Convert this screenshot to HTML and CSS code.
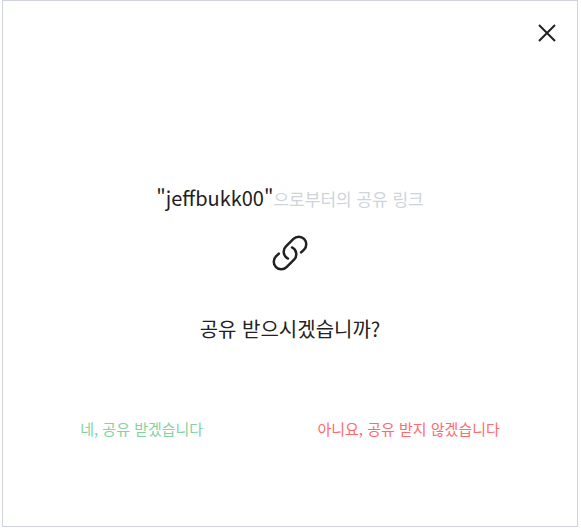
FILE: index.html
```html
<!DOCTYPE html>
<html lang="ko">
<head>
<meta charset="utf-8">
<meta name="viewport" content="width=device-width, initial-scale=1">
<title>공유 링크</title>
<link rel="stylesheet" href="styles.css">
</head>
<body>
<main class="dialog">
  <button class="close" type="button" aria-label="닫기">
    <svg viewBox="0 0 20 20" width="20" height="20" aria-hidden="true"><path d="M2 2L18 18M18 2L2 18"/></svg>
  </button>
  <section class="message">
    <p class="from"><span class="name">"jeffbukk00"</span><span class="suffix">으로부터의 공유 링크</span></p>
    <svg class="link-icon" viewBox="0 0 24 24" width="40" height="40" aria-hidden="true"><path d="M13.19 8.688a4.5 4.5 0 0 1 1.242 7.244l-4.5 4.5a4.5 4.5 0 0 1-6.364-6.364l1.757-1.757m13.35-.622 1.757-1.757a4.5 4.5 0 0 0-6.364-6.364l-4.5 4.5a4.5 4.5 0 0 0 1.242 7.244"/></svg>
    <h1 class="question">공유 받으시겠습니까?</h1>
  </section>
  <div class="actions">
    <button class="action accept" type="button">네, 공유 받겠습니다</button>
    <button class="action decline" type="button">아니요, 공유 받지 않겠습니다</button>
  </div>
</main>
</body>
</html>
```
FILE: styles.css
```css
* {
  box-sizing: border-box;
}

body {
  margin: 0;
  font-family: "Noto Sans CJK KR", sans-serif;
  color: #212121;
  background: #fff;
}

.dialog {
  display: flex;
  flex-direction: column;
  min-height: calc(100vh - 3px);
  margin: 0 3px 3px 2px;
  padding: 20px;
  border: 1px solid #d0d3dc;
}

.close {
  display: flex;
  align-self: flex-end;
  padding: 2px 0;
  border: 0;
  background: none;
  cursor: pointer;
}

.close svg {
  fill: none;
  stroke: #212121;
  stroke-width: 2;
}

.message {
  display: flex;
  flex-direction: column;
  align-items: center;
  margin-top: 137px;
}

.from {
  margin: 0;
  line-height: 32px;
}

.name {
  font-size: 20px;
}

.suffix {
  font-size: 17px;
  color: #ced4da;
}

.link-icon {
  margin: 18px 0 20px;
  fill: none;
  stroke: #212121;
  stroke-width: 1.5;
  stroke-linecap: round;
  stroke-linejoin: round;
}

.question {
  margin: 20px 0 0;
  font-size: 20px;
  font-weight: 400;
  line-height: 32px;
}

.actions {
  display: flex;
  justify-content: space-around;
  margin-top: 72px;
}

.action {
  padding: 0;
  border: 0;
  background: none;
  font-family: inherit;
  font-size: 15px;
  line-height: 24px;
  cursor: pointer;
}

.accept {
  color: #82d39f;
}

.decline {
  color: #ff6b6b;
}
```
